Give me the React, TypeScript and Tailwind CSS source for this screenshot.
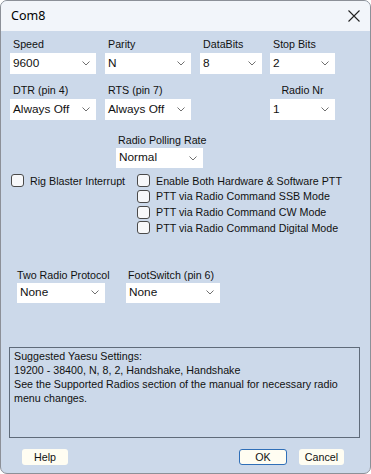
import React from 'react';

const Chevron: React.FC = () => (
  <svg width="8" height="5" viewBox="0 0 8 5" className="shrink-0">
    <path d="M0.5 0.5 L4 4 L7.5 0.5" fill="none" stroke="#707070" strokeWidth="1" />
  </svg>
);

const Select: React.FC<{ value: string; w: string; h?: string }> = ({ value, w, h = 'h-[21px]' }) => (
  <div className={`${w} ${h} bg-white flex items-center justify-between pl-[3px] pr-[6px] text-[11.8px] text-[#111]`}>
    <span>{value}</span>
    <Chevron />
  </div>
);

const Field: React.FC<{ label: string; value: string; w: string; center?: boolean }> = ({ label, value, w, center }) => (
  <div className={`flex flex-col ${w}`}>
    <div className={`h-[14px] leading-[14px] text-[10.7px] ${center ? 'text-center' : 'pl-[3px]'}`}>{label}</div>
    <div className="mt-[2px]">
      <Select value={value} w={w} />
    </div>
  </div>
);

const Check: React.FC<{ label: string }> = ({ label }) => (
  <div className="h-[15.67px] flex items-center">
    <div className="w-[13px] h-[13px] rounded-[3px] border border-[#4a4a4a] bg-[#f7f8fa] shrink-0" />
    <span className="ml-[6px] text-[10.7px] whitespace-nowrap">{label}</span>
  </div>
);

const Button: React.FC<{ label: string; w: string; primary?: boolean }> = ({ label, w, primary }) => (
  <div
    className={`${w} h-[16px] flex items-center justify-center text-[10.7px] bg-[#fffdf2] rounded-[3px] ${
      primary ? 'border border-[#2f6fb8]' : ''
    }`}
  >
    {label}
  </div>
);

const App: React.FC = () => {
  return (
    <div className="w-[371px] h-[474px] bg-white">
      <div
        className="w-[371px] h-[474px] flex flex-col border border-[#8c9098] rounded-[7px] overflow-hidden bg-[#ccd9ea] text-[#111]"
        style={{ fontFamily: '"Liberation Sans", Arial, sans-serif' }}
      >
        {/* Title bar */}
        <div className="h-[30px] bg-[#f2f5fa] flex items-center justify-between pl-[10px] pr-[10px] shrink-0">
          <span className="text-[12.5px] text-black" style={{ fontFamily: '"Noto Sans", "Open Sans", sans-serif' }}>
            Com8
          </span>
          <svg width="12" height="12" viewBox="0 0 12 12">
            <path d="M0.5 0.5 L11.5 11.5 M11.5 0.5 L0.5 11.5" stroke="#222" strokeWidth="1.1" fill="none" />
          </svg>
        </div>

        <div className="flex flex-col pl-[9px] pt-[6px]">
          {/* Row 1 */}
          <div className="flex">
            <Field label="Speed" value="9600" w="w-[86px]" />
            <div className="ml-[9px]">
              <Field label="Parity" value="N" w="w-[86px]" />
            </div>
            <div className="ml-[9px]">
              <Field label="DataBits" value="8" w="w-[62px]" />
            </div>
            <div className="ml-[8px]">
              <Field label="Stop Bits" value="2" w="w-[65px]" />
            </div>
          </div>

          {/* Row 2 */}
          <div className="flex mt-[9px]">
            <Field label="DTR (pin 4)" value="Always Off" w="w-[86px]" />
            <div className="ml-[9px]">
              <Field label="RTS (pin 7)" value="Always Off" w="w-[86px]" />
            </div>
            <div className="ml-[79px]">
              <Field label="Radio Nr" value="1" w="w-[65px]" center />
            </div>
          </div>

          {/* Polling */}
          <div className="flex mt-[13px] ml-[106px]">
            <div className="flex flex-col w-[87px]">
              <div className="h-[14px] leading-[14px] text-[10.7px] pl-[2px] whitespace-nowrap">Radio Polling Rate</div>
              <div className="mt-[1px]">
                <Select value="Normal" w="w-[87px]" h="h-[20px]" />
              </div>
            </div>
          </div>

          {/* Checkboxes */}
          <div className="flex mt-[5px] ml-[1px]">
            <div className="w-[126px]">
              <Check label="Rig Blaster Interrupt" />
            </div>
            <div className="flex flex-col">
              <Check label="Enable Both Hardware & Software PTT" />
              <Check label="PTT via Radio Command SSB Mode" />
              <Check label="PTT via Radio Command CW Mode" />
              <Check label="PTT via Radio Command Digital Mode" />
            </div>
          </div>

          {/* Two radio / footswitch */}
          <div className="flex mt-[32px] ml-[7px]">
            <div className="flex flex-col w-[88px]">
              <div className="h-[14px] leading-[14px] text-[10.7px] whitespace-nowrap">Two Radio Protocol</div>
              <div className="mt-[1px]">
                <Select value="None" w="w-[88px]" h="h-[20px]" />
              </div>
            </div>
            <div className="flex flex-col w-[94px] ml-[21px]">
              <div className="h-[14px] leading-[14px] text-[10.7px] pl-[2px] whitespace-nowrap">FootSwitch (pin 6)</div>
              <div className="mt-[1px]">
                <Select value="None" w="w-[94px]" h="h-[20px]" />
              </div>
            </div>
          </div>

          {/* Info box */}
          <div className="mt-[44px] -ml-[1px] w-[351px] h-[91px] border border-[#5f6b7a] pl-[4px] pt-[1px] text-[10.7px] leading-[14px]">
            <div>Suggested Yaesu Settings:</div>
            <div>19200 - 38400, N, 8, 2, Handshake, Handshake</div>
            <div>See the Supported Radios section of the manual for necessary radio</div>
            <div>menu changes.</div>
          </div>

          {/* Buttons */}
          <div className="flex items-center mt-[11px] ml-[12px]">
            <Button label="Help" w="w-[46px]" />
            <div className="ml-[171px]">
              <Button label="OK" w="w-[48px]" primary />
            </div>
            <div className="ml-[12px]">
              <Button label="Cancel" w="w-[45px]" />
            </div>
          </div>
        </div>
      </div>
    </div>
  );
};

export default App;
